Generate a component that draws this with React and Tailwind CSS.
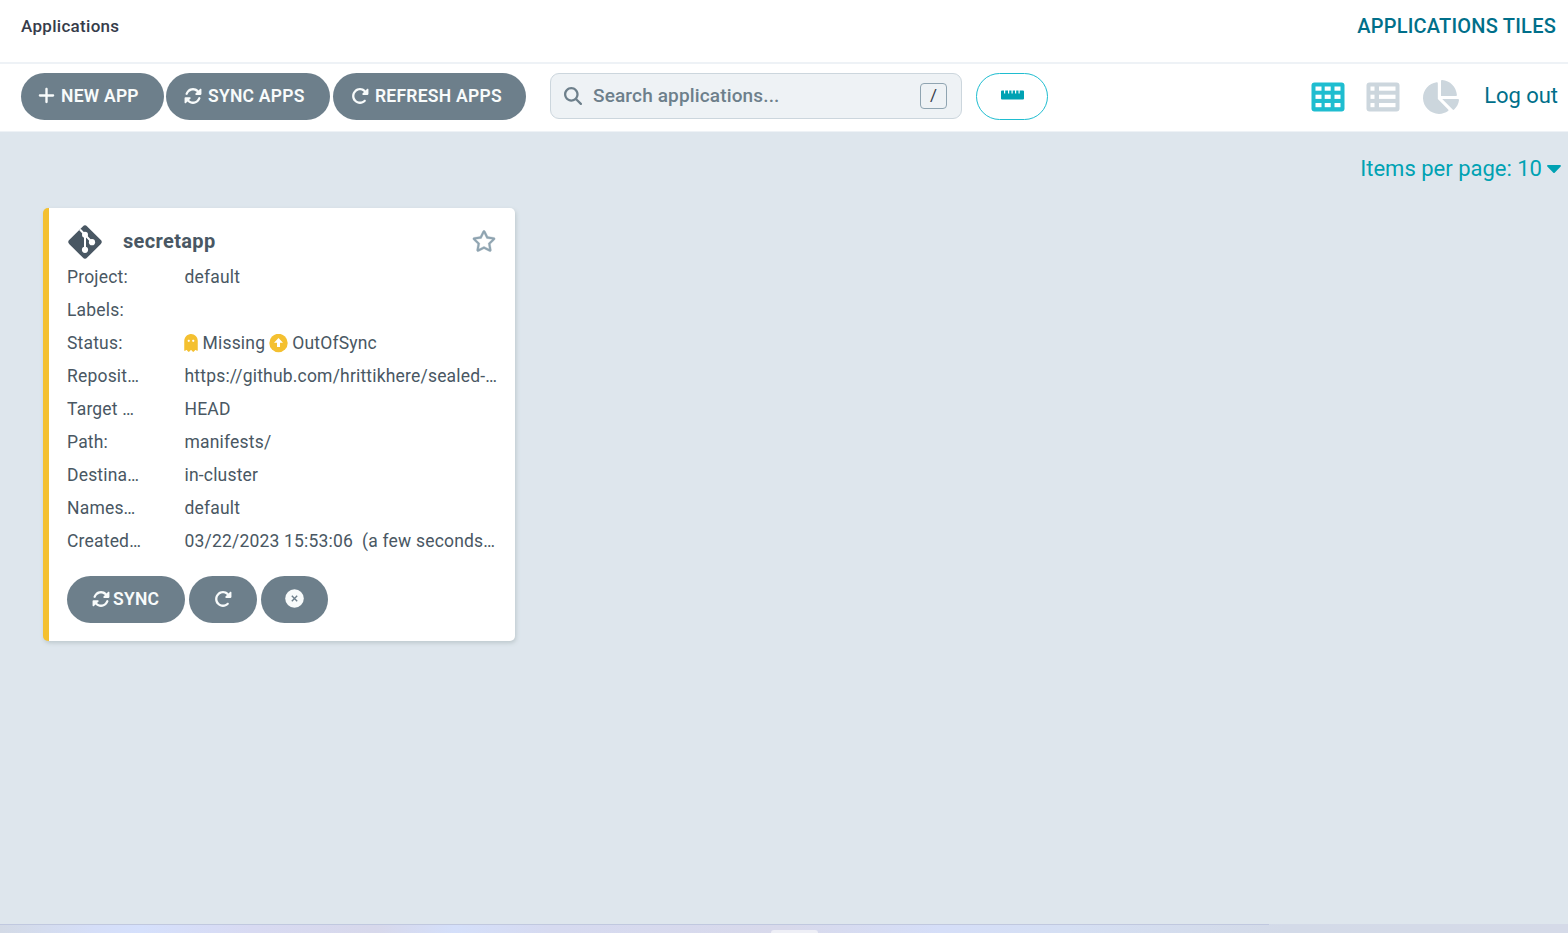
import { FaChartPie, FaCaretDown, FaGhost, FaRegStar } from 'react-icons/fa';
import { FaPlus, FaMagnifyingGlass, FaRotate, FaRotateRight } from 'react-icons/fa6';

const details = [
  { label: 'Project:', value: 'default' },
  { label: 'Labels:', value: '' },
  { label: 'Status:', status: true },
  { label: 'Reposit…', value: 'https://github.com/hrittikhere/sealed-…' },
  { label: 'Target …', value: 'HEAD' },
  { label: 'Path:', value: 'manifests/' },
  { label: 'Destina…', value: 'in-cluster' },
  { label: 'Names…', value: 'default' },
  { label: 'Created…', value: '03/22/2023 15:53:06  (a few seconds…' }
];

const RulerIcon = () => (
  <svg width="24" height="10" viewBox="0 0 24 10" fill="#00a2b3">
    <path d="M2 0.5h2v3h1.200v-3h2.800v3h1.200v-3h2.300v3h1.200v-3h2.300v3h1.200v-3h2.300v3h1.200v-3h3.300a1 1 0 0 1 1 1v7a1 1 0 0 1-1 1h-21a1 1 0 0 1-1-1v-7a1 1 0 0 1 1-1z" />
  </svg>
);

const GitIcon = () => (
  <svg width="34" height="34" viewBox="0 0 34 34">
    <path d="M14.800 1.400a3 3 0 0 1 4.400 0L32.600 14.800a3 3 0 0 1 0 4.400L19.200 32.600a3 3 0 0 1-4.400 0L1.400 19.200a3 3 0 0 1 0-4.400z" fill="#495763" />
    <path d="M12 4.500L24 17.200M17 9.500V25" stroke="#fff" strokeWidth="2" fill="none" />
    <circle cx="17" cy="9.800" r="3" fill="#fff" />
    <circle cx="24" cy="17.200" r="3.100" fill="#fff" />
    <circle cx="17" cy="24.800" r="3.100" fill="#fff" />
  </svg>
);

const OutOfSyncIcon = () => (
  <svg className="ml-1 mr-[4px]" width="19" height="19" viewBox="0 0 19 19">
    <circle cx="9.500" cy="9" r="9.200" fill="#f4c030" />
    <path d="M9.500 4L14 8.800h-3v4.200H8V8.800H5z" fill="#fff" />
  </svg>
);

const DeleteIcon = () => (
  <svg width="19" height="19" viewBox="0 0 19 19">
    <circle cx="9.500" cy="9.500" r="9.300" fill="#f8fbfb" />
    <path d="M6.800 6.800l5.400 5.400M12.200 6.800l-5.400 5.400" stroke="#6d7f8b" strokeWidth="1.400" />
  </svg>
);

const TilesIcon = () => (
  <svg width="34" height="30" viewBox="0 0 34 30">
    <rect x="0.500" y="0.500" width="33" height="29" rx="3" fill="#1fbdd0" />
    <g fill="#fff">
      {[4.500, 12.700, 21].map((y) => (
        <g key={y}>
          <rect x="4.500" y={y} width="6" height="4.200" />
          <rect x="13.700" y={y} width="6" height="4.200" />
          <rect x="23.500" y={y} width="6" height="4.200" />
        </g>
      ))}
    </g>
  </svg>
);

const ListIcon = () => (
  <svg width="34" height="30" viewBox="0 0 34 30">
    <rect x="0.500" y="0.500" width="33" height="29" rx="3" fill="#ccd6dd" />
    <g fill="#fff">
      {[4.500, 12.700, 21].map((y) => (
        <g key={y}>
          <rect x="4.500" y={y} width="4" height="4.200" />
          <rect x="13" y={y} width="16.500" height="4.200" />
        </g>
      ))}
    </g>
  </svg>
);

const App = () => {
  return (
    <div className="flex h-[933px] w-[1568px] flex-col overflow-hidden bg-[#dee6ed] font-['Roboto',sans-serif]">
      {/* Page title */}
      <header className="flex h-16 shrink-0 items-start justify-between border-b-2 border-[#eef2f6] bg-white pl-[21px] pr-3 pt-[10px]">
        <h1 className="text-[17px] font-medium leading-8 tracking-[0.300px] text-[#363c4a]">Applications</h1>
        <span className="text-[20px] font-medium leading-8 tracking-[0.220px] text-[#006f8a]">APPLICATIONS TILES</span>
      </header>

      {/* Toolbar */}
      <div className="flex h-[68px] shrink-0 items-start border-b border-[#eef2f6] bg-white pl-[21px] pr-[10px] pt-[9px] whitespace-nowrap">
        <div className="flex text-[17.500px] font-semibold tracking-[0.250px] text-[#f8fbfb]">
          <button className="mr-[2px] flex h-[47px] w-[143px] items-center rounded-full bg-[#6d7f8b] pb-px pl-4">
            <FaPlus className="mb-px mr-[5px] size-[19px]" />
            NEW APP
          </button>
          <button className="mr-[3px] flex h-[47px] w-[164px] items-center rounded-full bg-[#6d7f8b] pb-px pl-[18px]">
            <FaRotate className="mb-px mr-[6px] size-[18px]" />
            SYNC APPS
          </button>
          <button className="flex h-[47px] w-[193px] items-center rounded-full bg-[#6d7f8b] pb-px pl-[18px]">
            <FaRotateRight className="mb-px mr-[6px] size-[18px]" />
            REFRESH APPS
          </button>
        </div>

        <div className="ml-6 flex h-[46px] w-[412px] items-center rounded-[9px] border border-[#ccd6dd] bg-[#eef2f5] pl-[13px] pr-[14px]">
          <FaMagnifyingGlass className="mr-[11px] size-[18px] text-[#6d7f8b]" />
          <span className="text-[19px] font-medium tracking-[0.150px] text-[#6d7f8b]">Search applications...</span>
          <kbd className="ml-auto flex h-[26px] w-[27px] items-center justify-center rounded border border-[#8fa4b1] font-['Roboto',sans-serif] text-[17px] text-[#363c4a]">/</kbd>
        </div>

        <button className="ml-[14px] flex h-[47px] w-[72px] items-center justify-center rounded-full border border-[#1fbdd0] pb-[3px] pr-px">
          <RulerIcon />
        </button>

        <div className="ml-auto flex h-[47px] items-center">
          <TilesIcon />
          <div className="ml-[21px]">
            <ListIcon />
          </div>
          <FaChartPie className="ml-[23px] size-9 text-[#ccd6dd]" />
          <a className="ml-[25px] pb-[2px] text-[22px] tracking-[-0.050px] text-[#006f8a]">Log out</a>
        </div>
      </div>

      {/* Pagination */}
      <div className="mt-5 flex h-8 items-center justify-end pr-[6px] text-[22px] text-[#00a2b3]">
        Items per page: 10
        <FaCaretDown className="ml-1 h-[24px] w-4" />
      </div>

      {/* Application card */}
      <div className="ml-[43px] mt-6 h-[433px] w-[472px] rounded-[5px] border-l-[6px] border-[#f4c030] bg-white pl-[18px] pr-[19px] text-[#495763] shadow-[1px_2px_4px_#bdc8cc]">
        <div className="flex h-[53px] items-center pt-[14px]">
          <div className="ml-px">
            <GitIcon />
          </div>
          <h2 className="ml-[21px] pb-px text-[20px] font-bold tracking-[0.350px]">secretapp</h2>
          <FaRegStar className="mb-px ml-auto size-[24px] stroke-current stroke-[8px] text-[#8fa4b1]" />
        </div>

        {details.map((row) => (
          <div key={row.label} className="flex h-[33px] items-center whitespace-pre text-[17.500px] tracking-[0.190px]">
            <span className="w-[117.500px] shrink-0">{row.label}</span>
            {row.status ? (
              <span className="flex items-center">
                <FaGhost className="-ml-[2px] mb-[2px] mr-1 h-[18px] w-4 text-[#f4c030]" />
                Missing
                <OutOfSyncIcon />
                OutOfSync
              </span>
            ) : (
              <span>{row.value}</span>
            )}
          </div>
        ))}

        <div className="mt-[18px] flex gap-1 text-[17.500px] font-semibold tracking-[0.250px] text-[#f8fbfb]">
          <button className="flex h-[47px] w-[118px] items-center rounded-full bg-[#6d7f8b] pb-px pl-[25px]">
            <FaRotate className="mb-px mr-[3px] size-[18px]" />
            SYNC
          </button>
          <button className="flex h-[47px] w-[68px] items-center justify-center rounded-full bg-[#6d7f8b] pb-[2px]">
            <FaRotateRight className="size-[18px]" />
          </button>
          <button className="flex h-[47px] w-[67px] items-center justify-center rounded-full bg-[#6d7f8b] pb-[2px]">
            <DeleteIcon />
          </button>
        </div>
      </div>

      {/* Bottom strip */}
      <div className="mt-auto flex h-[9px] shrink-0 flex-col items-center bg-[linear-gradient(90deg,#d3dae6_0%,#d5def8_6%,#d5e0fc_9%,#d8daf2_16%,#d7d8eb_24%,#d4dffa_29%,#d6daf0_35%,#d8d9eb_50%,#d5def8_60%,#d5dff3_68%,#d3dae8_82%,#d5dae8_100%)]">
        <div className="h-px w-[1269px] self-start bg-[#c0c8df]"></div>
        <div className="ml-5 mt-[5px] h-[3px] w-[47px] rounded-t bg-[#eeeff6]"></div>
      </div>
    </div>
  );
};

export default App;
